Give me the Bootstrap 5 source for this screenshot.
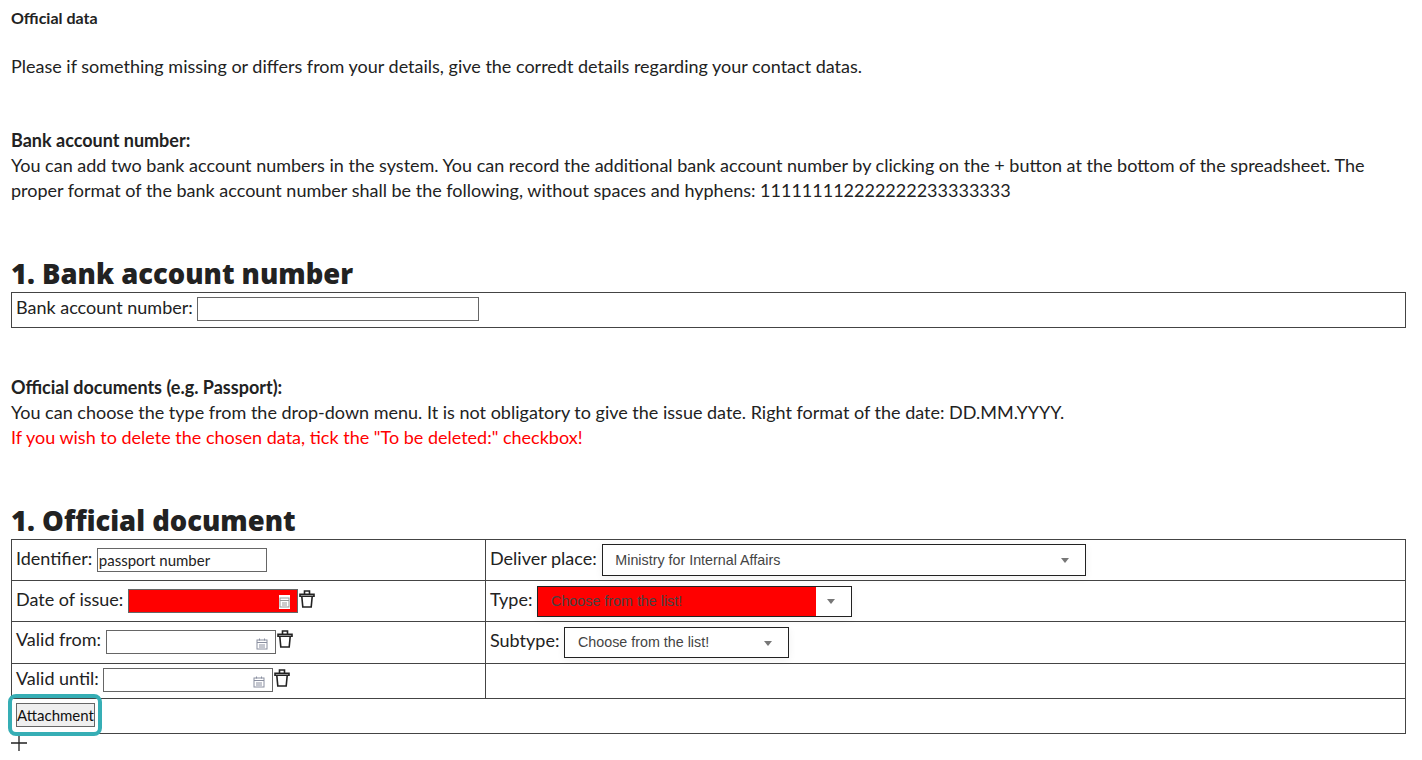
<!DOCTYPE html>
<html lang="en"><head><meta charset="utf-8"><title>Official data</title>
<link href="https://cdn.jsdelivr.net/npm/bootstrap@5.3.0/dist/css/bootstrap.min.css" rel="stylesheet">
<style>
body{font-family:Lato,"Liberation Sans",sans-serif;font-size:18px;line-height:25px;color:#222;background:#fff;padding:0 16px 0 11px;}
.page-title{font-size:16px;font-weight:700;line-height:20px;padding-top:8px;margin:0 0 26px;}
.txt{margin:0;}
.txt strong{font-weight:700;}
.sp-a{height:49px;}
.sp-c{height:47px;}
.sp-b{height:52px;}
.sec-head{font-family:"Noto Sans",sans-serif;font-weight:900;font-size:27.4px;line-height:37px;margin:0;color:#222;}
.frm{width:100%;border-collapse:collapse;table-layout:fixed;}
.frm td{border:1px solid #444;padding:0 4px;vertical-align:middle;white-space:nowrap;}
.frm td.up-1{padding-bottom:2px;}
.frm td.up-2{padding-bottom:4px;}
.col-l{width:474px;}
.h-35{height:35px;}
.h-41{height:41px;}
.h-42{height:42px;}
.txt-in{display:inline-block;height:24px;border:1px solid #666;background:#fff;vertical-align:middle;font-size:15px;line-height:22px;padding-left:1px;position:relative;}
.w-282{width:282px;}.w-170{width:170px;}
.in-red{background:#f00;}
.cal{position:absolute;right:7px;top:7px;width:12px;height:12px;display:block;}
.in-red .cal{right:7px;top:5px;background:#fff;width:11px;height:14px;}
.trash{vertical-align:middle;margin:-5px 0 0 1px;}
.sel{display:inline-flex;align-items:center;vertical-align:middle;border:1px solid #222;background:#fff;font-family:"Liberation Sans",sans-serif;font-size:14.3px;color:#444;position:relative;box-shadow:0 2px 8px rgba(0,0,0,.06);}
.sel-w1{width:484px;height:32px;padding-left:12px;margin-left:1px;}
.sel-w2{width:315px;height:31px;}
.sel-w3{width:225px;height:31px;padding-left:13px;}
.sel-fill{background:#f00;width:278px;height:100%;display:flex;align-items:center;padding-left:13px;color:#444;}
.caret-d{position:absolute;right:16px;top:50%;margin-top:-2px;width:0;height:0;border-left:4.5px solid transparent;border-right:4.5px solid transparent;border-top:5px solid #777;}
.attach{font-size:15px;line-height:20px;height:24px;width:79px;padding:0;border:1px solid #666;background:#efefef;color:#111;border-radius:0;vertical-align:middle;display:block;}
.ann{position:absolute;left:-8px;top:-9px;width:94px;height:42px;border:4px solid #36aeb5;border-radius:8px;pointer-events:none;}
.rel{position:relative;display:inline-block;vertical-align:middle;}
.red-note{color:#f00;}
.plus{display:block;margin-top:1px;}
</style></head><body>
<p class="page-title">Official data</p>
<p class="txt">Please if something missing or differs from your details, give the corredt details regarding your contact datas.</p>
<div class="sp-a"></div>
<p class="txt"><strong>Bank account number:</strong><br>You can add two bank account numbers in the system. You can record the additional bank account number by clicking on the + button at the bottom of the spreadsheet. The proper format of the bank account number shall be the following, without spaces and hyphens: 111111112222222233333333</p>
<div class="sp-b"></div>
<h2 class="sec-head">1. Bank account number</h2>
<table class="frm"><tr class="h-35"><td class="up-2">Bank account number: <span class="txt-in w-282"></span></td></tr></table>
<div class="sp-c"></div>
<p class="txt"><strong>Official documents (e.g. Passport):</strong><br>You can choose the type from the drop-down menu. It is not obligatory to give the issue date. Right format of the date: DD.MM.YYYY.<br><span class="red-note">If you wish to delete the chosen data, tick the "To be deleted:" checkbox!</span></p>
<div class="sp-b"></div>
<h2 class="sec-head">1. Official document</h2>
<table class="frm">
<colgroup><col class="col-l"><col></colgroup>
<tr class="h-41"><td class="up-1">Identifier: <span class="txt-in w-170">passport number</span></td><td>Deliver place: <span class="sel sel-w1">Ministry for Internal Affairs<i class="caret-d"></i></span></td></tr>
<tr class="h-41"><td class="up-1">Date of issue: <span class="txt-in w-170 in-red"><svg class="cal" viewBox="0 0 11 14"><rect x="1" y="3" width="9" height="9" fill="none" stroke="#999"/><path d="M1 5.5h9M3 8h5M3 10h5" stroke="#999"/></svg></span><svg class="trash" width="16" height="18" viewBox="0 0 16 18" fill="none" stroke="#222" stroke-width="1.6"><path d="M5.500 3.500V1h5v2.500M1 4.200h14v2H1zM2.800 6.500l1 10.500h8.400l1-10.500"/></svg></td><td>Type: <span class="sel sel-w2"><span class="sel-fill">Choose from the list!</span><i class="caret-d"></i></span></td></tr>
<tr class="h-42"><td class="up-2">Valid from: <span class="txt-in w-170"><svg class="cal" viewBox="0 0 12 12"><rect x="1" y="2" width="10" height="9" fill="none" stroke="#8a8fa0"/><path d="M1 4.500h10M3 7h6M3 9h6M3.500 0.500v2M8.500 0.500v2" stroke="#8a8fa0"/></svg></span><svg class="trash" width="16" height="18" viewBox="0 0 16 18" fill="none" stroke="#222" stroke-width="1.6"><path d="M5.500 3.500V1h5v2.500M1 4.200h14v2H1zM2.800 6.500l1 10.500h8.400l1-10.500"/></svg></td><td>Subtype: <span class="sel sel-w3">Choose from the list!<i class="caret-d"></i></span></td></tr>
<tr class="h-35"><td class="up-2">Valid until: <span class="txt-in w-170"><svg class="cal" viewBox="0 0 12 12"><rect x="1" y="2" width="10" height="9" fill="none" stroke="#8a8fa0"/><path d="M1 4.500h10M3 7h6M3 9h6M3.500 0.500v2M8.500 0.500v2" stroke="#8a8fa0"/></svg></span><svg class="trash" width="16" height="18" viewBox="0 0 16 18" fill="none" stroke="#222" stroke-width="1.6"><path d="M5.500 3.500V1h5v2.500M1 4.200h14v2H1zM2.800 6.500l1 10.500h8.400l1-10.500"/></svg></td><td></td></tr>
<tr class="h-35"><td colspan="2" class="up-2"><span class="rel"><button type="button" class="attach">Attachment</button><span class="ann"></span></span></td></tr>
</table>
<svg class="plus" width="16" height="16" viewBox="0 0 16 16" stroke="#222" stroke-width="1.300"><path d="M0 8h16M8 0v16"/></svg>
</body></html>
